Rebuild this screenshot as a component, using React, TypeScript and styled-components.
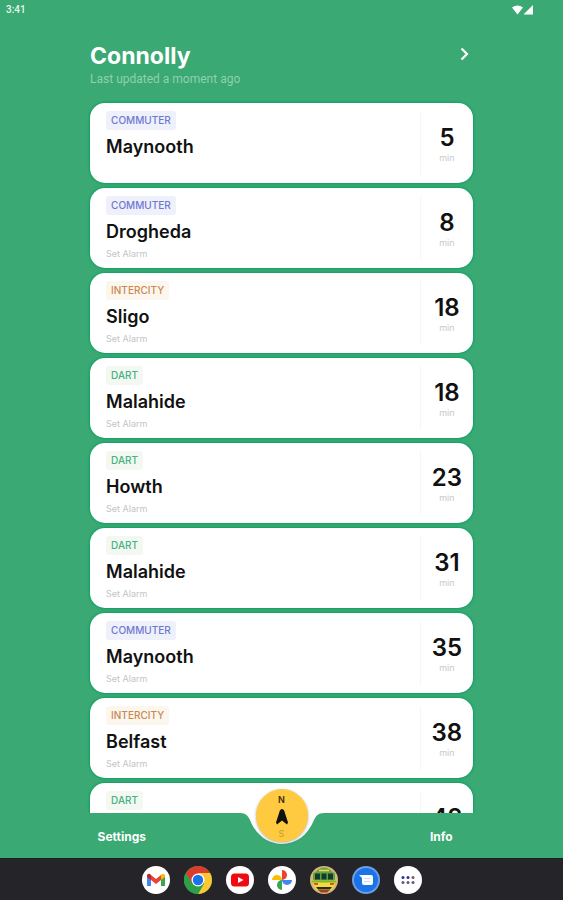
import React from "react";
import styled, { createGlobalStyle } from "styled-components";

const GlobalStyle = createGlobalStyle`
  * { box-sizing: border-box; }
  body {
    margin: 0;
    background: #3aa974;
    font-family: Inter, "Liberation Sans", sans-serif;
  }
  button { font: inherit; border: 0; padding: 0; background: none; cursor: pointer; }
  h1, h2, p, ul { margin: 0; padding: 0; }
`;

type Kind = "COMMUTER" | "INTERCITY" | "DART";

interface Train {
  kind: Kind;
  name: string;
  minutes: number;
  alarm: boolean;
}

const trains: Train[] = [
  { kind: "COMMUTER", name: "Maynooth", minutes: 5, alarm: false },
  { kind: "COMMUTER", name: "Drogheda", minutes: 8, alarm: true },
  { kind: "INTERCITY", name: "Sligo", minutes: 18, alarm: true },
  { kind: "DART", name: "Malahide", minutes: 18, alarm: true },
  { kind: "DART", name: "Howth", minutes: 23, alarm: true },
  { kind: "DART", name: "Malahide", minutes: 31, alarm: true },
  { kind: "COMMUTER", name: "Maynooth", minutes: 35, alarm: true },
  { kind: "INTERCITY", name: "Belfast", minutes: 38, alarm: true },
  { kind: "DART", name: "Bray", minutes: 42, alarm: true },
];

const kindColors: Record<Kind, { text: string; fill: string }> = {
  COMMUTER: { text: "#6f78d0", fill: "#eef0fa" },
  INTERCITY: { text: "#cc8850", fill: "#fbf7ee" },
  DART: { text: "#46b27e", fill: "#f3f8f3" },
};

const Screen = styled.div`
  display: flex;
  flex-direction: column;
  height: 100vh;
  background: #3aa974;
  overflow: hidden;
`;

const StatusBar = styled.div`
  display: flex;
  flex: none;
  align-items: center;
  justify-content: space-between;
  height: 19px;
  padding: 0 29px 0 6px;
  color: #e8f7ee;
  font-family: Roboto, sans-serif;
  font-size: 10px;
  font-weight: 500;
`;

const Signals = styled.svg`
  width: 22px;
  height: 10px;
  fill: #fff;
`;

const Main = styled.main`
  flex: 1;
  min-height: 0;
  padding: 0 16%;
  overflow: hidden;
`;

const Header = styled.header`
  display: flex;
  align-items: flex-start;
  justify-content: space-between;
  padding: 22px 2px 16px 0;
`;

const Station = styled.h1`
  color: #fff;
  font-size: 23px;
  line-height: 30px;
  font-weight: 700;
`;

const Updated = styled.p`
  color: #8fd0af;
  font-family: Roboto, sans-serif;
  font-size: 12px;
  line-height: 16px;
`;

const NextButton = styled.button`
  display: flex;
  margin-top: 6px;
  color: #fff;
`;

const List = styled.ul`
  display: grid;
  gap: 5px;
  list-style: none;
`;

const Card = styled.li`
  display: flex;
  height: 80px;
  padding: 8px 0;
  border-radius: 15px;
  background: #fff;
  box-shadow: 0 0 2px 1px #12a163;
`;

const Details = styled.div`
  display: flex;
  flex: 1;
  flex-direction: column;
  align-items: flex-start;
  padding-left: 16px;
`;

const Badge = styled.span<{ $kind: Kind }>`
  padding: 0 5px;
  border-radius: 3px;
  background: ${(p) => kindColors[p.$kind].fill};
  color: ${(p) => kindColors[p.$kind].text};
  font-size: 10px;
  line-height: 19px;
  font-weight: 500;
`;

const Destination = styled.h2`
  margin-top: 5px;
  color: #111;
  font-size: 18px;
  line-height: 24px;
  font-weight: 600;
`;

const AlarmButton = styled.button`
  margin-top: 4px;
  color: #c4c4c4;
  font-size: 9px;
  line-height: 12px;
`;

const Due = styled.div`
  display: flex;
  flex-direction: column;
  align-items: center;
  width: 53px;
  padding-top: 12px;
  border-left: 1px solid #f6f6f6;
`;

const Minutes = styled.span`
  color: #111;
  font-size: 24px;
  line-height: 30px;
  font-weight: 600;
`;

const Unit = styled.span`
  color: #c8c8c8;
  font-size: 9px;
  line-height: 10px;
`;

const Nav = styled.nav`
  position: relative;
  display: grid;
  flex: none;
  grid-template-columns: 1fr 84px 1fr;
  height: 45px;
  margin-top: -45px;
`;

const NavLink = styled.a`
  display: flex;
  align-items: center;
  justify-content: center;
  padding-top: 2px;
  background: #3aa974;
  color: #fff;
  font-size: 12px;
  font-weight: 700;
  text-decoration: none;
  &:first-child { padding-left: 4px; }
  &:last-child { padding-right: 4px; }
`;

const Center = styled.div`
  position: relative;
`;

const Notch = styled.svg`
  display: block;
  width: 84px;
  height: 45px;
`;

const Compass = styled.button`
  position: absolute;
  top: -24px;
  left: 16px;
  width: 52px;
  height: 53px;
  border-radius: 50%;
  background: #ffca40;
  box-shadow: 0 1px 3px rgba(0, 0, 0, 0.3);
  display: flex;
  flex-direction: column;
  align-items: center;
  justify-content: center;
  gap: 3px;
  padding-top: 2px;
`;

const Pole = styled.span<{ $faded?: boolean }>`
  color: ${(p) => (p.$faded ? "#c39a36" : "#3a2c08")};
  font-size: 9px;
  line-height: 12px;
  font-weight: ${(p) => (p.$faded ? 400 : 600)};
`;

const Taskbar = styled.footer`
  position: relative;
  display: flex;
  flex: none;
  align-items: center;
  justify-content: center;
  gap: 14px;
  height: 42px;
  background: #242429;
  border-top: 1px solid #15221d;
`;

const AppButton = styled.button`
  display: block;
  width: 28px;
  height: 28px;
  svg { display: block; }
`;

const AppIcon = ({ label, children }: { label: string; children: React.ReactNode }) => (
  <AppButton aria-label={label}>
    <svg width="28" height="28" viewBox="0 0 28 28">{children}</svg>
  </AppButton>
);

const Disc = ({ fill = "#fff" }: { fill?: string }) => <circle cx="14" cy="14" r="14" fill={fill} />;

export default function App() {
  return (
    <Screen>
      <GlobalStyle />
      <StatusBar>
        <span>3:41</span>
        <Signals viewBox="0 0 22 10" aria-hidden="true">
          <path d="M0 2.5Q5.5-1.5 11 2.5L5.5 9.5Z" />
          <path d="M21 0V9.5H11.5Z" />
        </Signals>
      </StatusBar>
      <Main>
        <Header>
          <div>
            <Station>Connolly</Station>
            <Updated>Last updated a moment ago</Updated>
          </div>
          <NextButton aria-label="Next station">
            <svg width="12" height="14" viewBox="0 0 12 14" fill="none" stroke="currentColor" strokeWidth="2.2">
              <path d="M2.5 1.5L8 7L2.5 12.5" />
            </svg>
          </NextButton>
        </Header>
        <List>
          {trains.map((t, i) => (
            <Card key={i}>
              <Details>
                <Badge $kind={t.kind}>{t.kind}</Badge>
                <Destination>{t.name}</Destination>
                {t.alarm && <AlarmButton>Set Alarm</AlarmButton>}
              </Details>
              <Due>
                <Minutes>{t.minutes}</Minutes>
                <Unit>min</Unit>
              </Due>
            </Card>
          ))}
        </List>
      </Main>
      <Nav>
        <NavLink href="#settings">Settings</NavLink>
        <Center>
          <Notch viewBox="0 0 84 45" aria-hidden="true">
            <path d="M0 0C6 0 8 3 10 7C16 22 28 31 42 31C56 31 68 22 74 7C76 3 78 0 84 0V45H0Z" fill="#3aa974" />
          </Notch>
          <Compass aria-label="Nearest station">
            <Pole>N</Pole>
            <svg width="12" height="16" viewBox="0 0 12 16">
              <path d="M6 0C7.2 0 8 1 8.3 2L12 13.5L11 15.5L6 11.5L1 15.5L0 13.5L3.7 2C4 1 4.8 0 6 0Z" fill="#111" />
            </svg>
            <Pole $faded>S</Pole>
          </Compass>
        </Center>
        <NavLink href="#info">Info</NavLink>
      </Nav>
      <Taskbar>
        <AppIcon label="Gmail">
          <Disc />
          <path d="M5 9.5V20H9V13Z" fill="#4285f4" />
          <path d="M23 9.5V20H19V13Z" fill="#34a853" />
          <path d="M9 9L14 13L19 9V14L14 18L9 14Z" fill="#ea4335" />
          <path d="M5 10C5 7.5 7.5 7 9 9V14L5 11Z" fill="#c5221f" />
          <path d="M23 10C23 7.5 20.5 7 19 9V14L23 11Z" fill="#fbbc04" />
        </AppIcon>
        <AppIcon label="Chrome">
          <Disc fill="#34a853" />
          <path d="M14 14L1.9 7A14 14 0 0 1 26.1 7Z" fill="#dc3b2e" />
          <path d="M14 7H26.1A14 14 0 0 1 14 28L20 17.5Z" fill="#fcc934" />
          <path d="M1.9 7L8 17.5L14 8V7Z" fill="#dc3b2e" />
          <path d="M1.9 7L8 17.5L14 20L20 17.5L14 28A14 14 0 0 1 1.9 7Z" fill="#2f9e4b" />
          <circle cx="14" cy="14" r="6.5" fill="#fff" />
          <circle cx="14" cy="14" r="5.2" fill="#1a73e8" />
        </AppIcon>
        <AppIcon label="YouTube">
          <Disc />
          <rect x="5" y="7.5" width="18" height="13" rx="3.5" fill="#f00a14" />
          <path d="M12 11L17.5 14L12 17Z" fill="#fff" />
        </AppIcon>
        <AppIcon label="Photos">
          <Disc />
          <path d="M14 4A5 5 0 0 1 14 14Z" fill="#ea4335" />
          <path d="M24 14A5 5 0 0 1 14 14Z" fill="#4285f4" />
          <path d="M14 24A5 5 0 0 1 14 14Z" fill="#34a853" />
          <path d="M4 14A5 5 0 0 1 14 14Z" fill="#fbbc04" />
        </AppIcon>
        <AppIcon label="Trains">
          <Disc fill="#d2b879" />
          <path d="M4.5 7Q14-4 23.5 7Z" fill="#6ba43c" />
          <path d="M9 4.5H19" stroke="#e6d560" strokeWidth="1.5" />
          <path d="M2 14H26Q25.5 21 20 24.5H8Q2.5 21 2 14Z" fill="#f0dc3c" />
          <rect x="3" y="6.5" width="22" height="8" rx="1.5" fill="#5fa044" />
          <path d="M5 7.5H10V13.5H5ZM11.5 7.5H16.5V13.5H11.5ZM18 7.5H23V13.5H18Z" fill="#173a2c" />
          <path d="M2 14.5H26V16.5H2Z" fill="#7fb82e" />
          <path d="M3.5 17H8V19H4.5ZM20 17H24.5L23.5 19H20Z" fill="#e34b2c" />
          <path d="M6 21H22L20 23.5H8Z" fill="#352521" />
          <path d="M8 24H20L17 26.5H11Z" fill="#a63b2a" />
        </AppIcon>
        <AppIcon label="Messages">
          <Disc fill="#6d9fe0" />
          <circle cx="14" cy="14" r="12" fill="#1a73e8" />
          <path d="M7 9H19Q21 9 21 11V17Q21 19 19 19H12Q10 19 10 17V12Z" fill="#fff" />
          <path d="M12 12.5H18.5M12 15.5H18.5" stroke="#c4dcfb" />
        </AppIcon>
        <AppIcon label="All apps">
          <Disc />
          {[9, 14, 19].map((x) => (
            <React.Fragment key={x}>
              <circle cx={x} cy="11.5" r="1.5" fill={x === 19 ? "#8a5068" : "#30309a"} />
              <circle cx={x} cy="16.5" r="1.5" fill="#5c5c78" />
            </React.Fragment>
          ))}
        </AppIcon>
      </Taskbar>
    </Screen>
  );
}
